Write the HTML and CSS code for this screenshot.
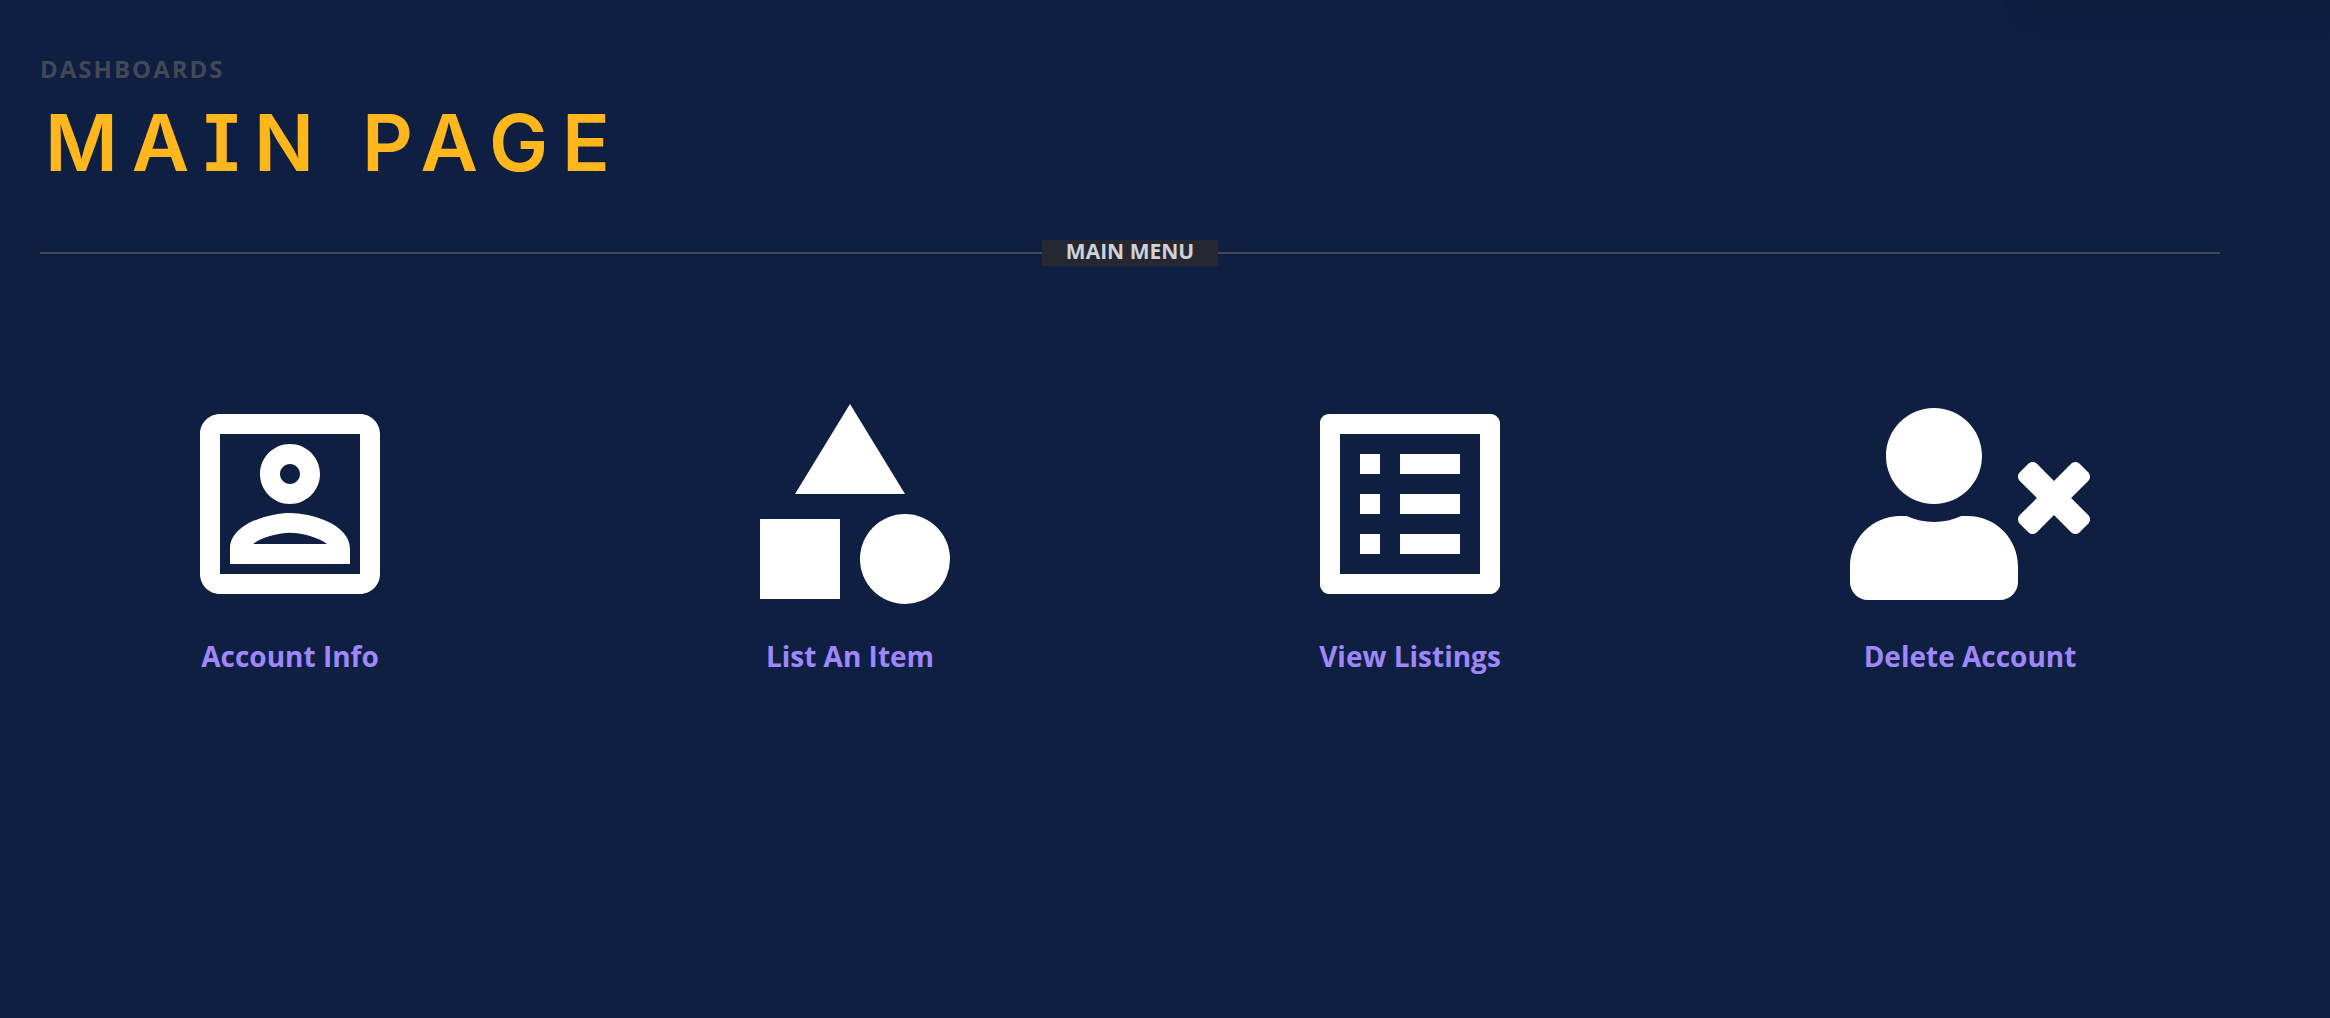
FILE: index.html
```html
<!DOCTYPE html>
<html lang="en">
<head>
<meta charset="utf-8">
<meta name="viewport" content="width=device-width, initial-scale=1">
<title>Main Page</title>
<link rel="stylesheet" href="styles.css">
</head>
<body>
<div class="top-shade" aria-hidden="true"></div>
<main class="page">
  <header class="page-header">
    <p class="eyebrow">DASHBOARDS</p>
    <h1 class="title">MAIN PAGE</h1>
  </header>
  <div class="divider">
    <h2 class="divider-label">MAIN MENU</h2>
  </div>
  <nav class="menu" aria-label="Main menu">
    <a class="menu-item" href="#account">
      <svg class="icon" viewBox="0 0 24 24" aria-hidden="true"><path d="M19 5v14H5V5h14m0-2H5c-1.1 0-2 .9-2 2v14c0 1.1.9 2 2 2h14c1.1 0 2-.9 2-2V5c0-1.1-.9-2-2-2zm-7 9c-1.65 0-3-1.35-3-3s1.35-3 3-3 3 1.35 3 3-1.35 3-3 3zm0-4c-.55 0-1 .45-1 1s.45 1 1 1 1-.45 1-1-.45-1-1-1zm6 10H6v-1.53c0-2.5 3.97-3.58 6-3.58s6 1.08 6 3.58V18zm-9.69-2h7.38c-.69-.56-2.38-1.12-3.69-1.12s-3.01.56-3.69 1.12z"/></svg>
      <span>Account Info</span>
    </a>
    <a class="menu-item" href="#new-item">
      <svg class="icon" viewBox="0 0 24 24" aria-hidden="true"><path d="M12 2l5.5 9h-11z"/><circle cx="17.5" cy="17.5" r="4.5"/><path d="M3 13.5h8v8H3z"/></svg>
      <span>List An Item</span>
    </a>
    <a class="menu-item" href="#listings">
      <svg class="icon" viewBox="0 0 24 24" aria-hidden="true"><path d="M11 7h6v2h-6zm0 4h6v2h-6zm0 4h6v2h-6zM7 7h2v2H7zm0 4h2v2H7zm0 4h2v2H7zM20.1 3H3.9c-.5 0-.9.4-.9.9v16.2c0 .4.4.9.9.9h16.2c.4 0 .9-.5.9-.9V3.9c0-.5-.5-.9-.9-.9zM19 19H5V5h14v14z"/></svg>
      <span>View Listings</span>
    </a>
    <a class="menu-item" href="#delete">
      <svg class="icon" viewBox="0 0 640 512" aria-hidden="true"><path d="M589.6 240l45.6-45.6c6.3-6.3 6.3-16.5 0-22.8l-22.8-22.8c-6.3-6.3-16.5-6.3-22.8 0L544 194.4l-45.6-45.6c-6.3-6.3-16.5-6.3-22.8 0l-22.8 22.8c-6.3 6.3-6.3 16.5 0 22.8l45.6 45.6-45.6 45.6c-6.3 6.3-6.3 16.5 0 22.8l22.8 22.8c6.3 6.3 16.5 6.3 22.8 0l45.6-45.6 45.6 45.6c6.3 6.3 16.5 6.3 22.8 0l22.8-22.8c6.3-6.3 6.3-16.5 0-22.8L589.6 240zM224 256c70.7 0 128-57.3 128-128S294.7 0 224 0 96 57.3 96 128s57.3 128 128 128zm89.6 32h-16.7c-22.2 10.2-46.9 16-72.9 16s-50.6-5.8-72.9-16h-16.7C60.2 288 0 348.2 0 422.4V464c0 26.5 21.5 48 48 48h352c26.5 0 48-21.5 48-48v-41.6c0-74.2-60.2-134.4-134.4-134.4z"/></svg>
      <span>Delete Account</span>
    </a>
  </nav>
</main>
</body>
</html>
```
FILE: styles.css
```css
* {
  box-sizing: border-box;
}

body {
  margin: 0;
  min-height: 100vh;
  overflow-x: hidden;
  background: #0f1f42;
  font-family: "Open Sans", "Noto Sans", sans-serif;
}

.top-shade {
  position: absolute;
  top: -40px;
  right: 0;
  width: 290px;
  height: 30px;
  box-shadow: 0 8px 32px rgba(12, 22, 40, 0.6);
}

.page {
  padding: 51px 110px 40px 40px;
}

.eyebrow {
  margin: 0;
  color: #434857;
  font-size: 24px;
  font-weight: 700;
  line-height: 36px;
  letter-spacing: 2px;
}

.title {
  margin: 0;
  padding-left: 5px;
  color: #ffb71c;
  font-family: Inter, sans-serif;
  font-size: 79px;
  font-weight: 600;
  line-height: 110px;
  letter-spacing: 14px;
  font-feature-settings: "cv08";
}

.divider {
  display: flex;
  align-items: center;
  margin-top: 43px;
}

.divider::before,
.divider::after {
  content: "";
  flex: 1;
  height: 2px;
  background: #434857;
}

.divider-label {
  margin: 0;
  padding: 0 24px 4px;
  background: #252830;
  color: #cfd2da;
  font-size: 21px;
  font-weight: 700;
  line-height: 22px;
}

.menu {
  display: grid;
  grid-template-columns: repeat(4, 1fr);
  margin: 118px -30px 0;
}

.menu-item {
  display: flex;
  flex-direction: column;
  align-items: center;
  gap: 12px;
  color: #9f87ff;
  font-size: 28px;
  font-weight: 700;
  line-height: 40px;
  text-decoration: none;
}

.icon {
  width: 240px;
  height: 240px;
  fill: #fff;
}
```
